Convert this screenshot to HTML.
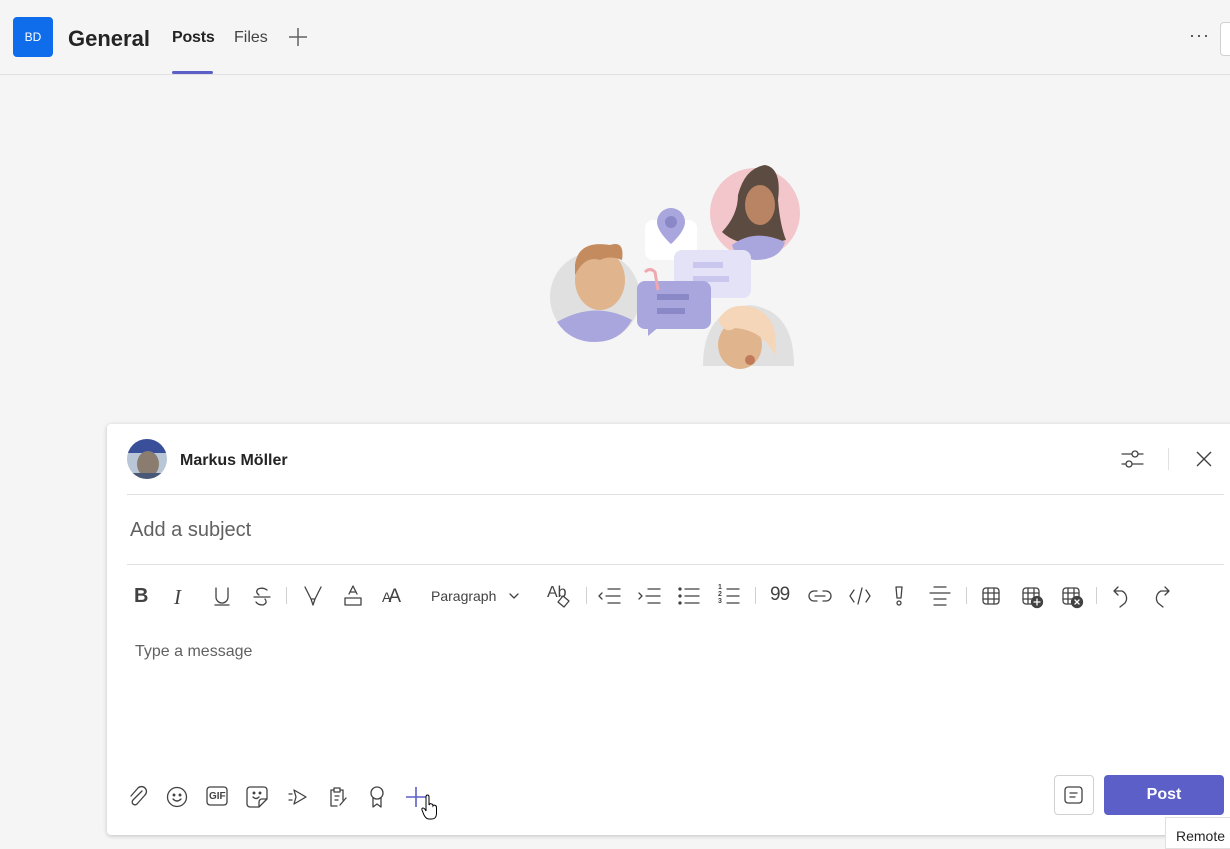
<!DOCTYPE html>
<html><head><meta charset="utf-8"><style>
*{margin:0;padding:0;box-sizing:border-box}
body{width:1230px;height:846px;overflow:hidden;background:#f5f5f5;font-family:"Liberation Sans",sans-serif;position:relative;color:#242424}
.abs{position:absolute}
svg{position:absolute;overflow:visible}
.ic{fill:none;stroke:#424242;stroke-width:1.3;stroke-linecap:round;stroke-linejoin:round}
</style></head><body>
<!-- header -->
<div class="abs" style="left:13px;top:17px;width:40px;height:40px;border-radius:4px;background:#0f6cea;color:#fff;font-size:12px;line-height:40px;text-align:center">BD</div>
<div class="abs" style="left:68px;top:26px;font-size:22px;font-weight:bold;color:#242424">General</div>
<div class="abs" style="left:172px;top:29px;font-size:16px;color:#242424;font-weight:bold;letter-spacing:-0.2px">Posts</div>
<div class="abs" style="left:172px;top:71px;width:41px;height:3px;background:#5b5fc7;border-radius:2px"></div>
<div class="abs" style="left:234px;top:29px;font-size:16px;color:#424242">Files</div>
<svg style="left:288px;top:27px" width="20" height="20"><path d="M10 1V19M1 10H19" stroke="#616161" stroke-width="1.5"/></svg>
<div class="abs" style="left:1189px;top:25px;font-size:18px;color:#424242;letter-spacing:1px">···</div>
<div class="abs" style="left:1220px;top:22px;width:20px;height:34px;border:1px solid #d1d1d1;border-radius:4px;background:#fff"></div>
<div class="abs" style="left:0;top:74px;width:1230px;height:1px;background:#e0e0e0"></div>

<!-- illustration -->
<svg style="left:540px;top:160px" width="270" height="210" viewBox="0 0 270 210">
<circle cx="55" cy="137" r="45" fill="#e0e0e0"/>
<path d="M17 162Q55 140 92 160Q80 182 55 182Q30 182 17 162Z" fill="#a9a6de"/>
<ellipse cx="60" cy="120" rx="25" ry="30" fill="#e0b48c"/>
<path d="M35 105Q38 80 70 85Q85 80 82 100Q70 95 60 100Q45 95 35 115Z" fill="#c48b5e"/>
<circle cx="215" cy="53" r="45" fill="#f3c6cb"/>
<path d="M182 72Q198 55 198 35Q205 8 225 5Q242 8 238 40Q240 65 246 80Q230 84 215 84Q195 84 182 72Z" fill="#5b4b40"/>
<ellipse cx="220" cy="45" rx="15" ry="20" fill="#b88463"/>
<path d="M192 85Q215 68 245 82Q240 100 215 100Q195 98 192 85Z" fill="#a9a6de"/>
<rect x="105" y="60" width="52" height="40" rx="8" fill="#fff"/>
<path d="M131 48a14 14 0 0 1 14 14c0 10-14 22-14 22s-14-12-14-22a14 14 0 0 1 14-14z" fill="#a9a6de"/>
<circle cx="131" cy="62" r="6" fill="#8b88c8"/>
<rect x="134" y="90" width="77" height="48" rx="8" fill="#e3e2f6"/>
<rect x="153" y="102" width="30" height="6" fill="#c9c7ee"/><rect x="153" y="116" width="36" height="6" fill="#c9c7ee"/>
<rect x="97" y="121" width="74" height="48" rx="8" fill="#a9a6de"/>
<path d="M108 165L108 176L120 166Z" fill="#a9a6de"/>
<rect x="117" y="134" width="32" height="6" fill="#8b88c8"/><rect x="117" y="148" width="28" height="6" fill="#8b88c8"/>
<path d="M105 112q5-5 10 0l3 18" stroke="#f0a8b0" stroke-width="3" fill="none"/>
<path d="M163 206Q163 150 210 145Q254 150 254 206Z" fill="#e0e0e0"/>
<ellipse cx="200" cy="185" rx="22" ry="24" fill="#e0b48c"/>
<path d="M178 160Q190 140 215 148Q240 158 235 195Q222 170 195 168Q185 175 178 160Z" fill="#f5d6b8"/>
<circle cx="210" cy="200" r="5" fill="#c07a5a"/>
</svg>

<!-- compose box -->
<div class="abs" style="left:107px;top:424px;width:1130px;height:411px;background:#fff;border-radius:4px;box-shadow:0 1px 4px rgba(0,0,0,.22)"></div>
<div class="abs" style="left:127px;top:439px;width:40px;height:40px;border-radius:50%;overflow:hidden;background:#b8c6d8">
 <div class="abs" style="left:0;top:0;width:40px;height:14px;background:#3a4f9a"></div>
 <div class="abs" style="left:10px;top:12px;width:22px;height:26px;border-radius:50%;background:#8a7d70"></div>
 <div class="abs" style="left:2px;top:34px;width:36px;height:10px;background:#4a5878"></div>
</div>
<div class="abs" style="left:180px;top:452px;font-size:16px;font-weight:bold;color:#242424">Markus Möller</div>
<svg style="left:1121px;top:449px" width="22" height="20" class="ic"><path d="M1 5H22M1 15H22" stroke="#424242" stroke-width="1.2"/><circle cx="14" cy="5" r="3" fill="#fff" stroke="#424242"/><circle cx="8" cy="15" r="3" fill="#fff" stroke="#424242"/></svg>
<div class="abs" style="left:1168px;top:448px;width:1px;height:22px;background:#e0e0e0"></div>
<svg style="left:1196px;top:451px" width="16" height="16"><path d="M1 1L15 15M15 1L1 15" stroke="#424242" stroke-width="1.4"/></svg>
<div class="abs" style="left:127px;top:494px;width:1097px;height:1px;background:#e0e0e0"></div>
<div class="abs" style="left:130px;top:519px;font-size:20px;color:#616161">Add a subject</div>
<div class="abs" style="left:127px;top:564px;width:1097px;height:1px;background:#e0e0e0"></div>

<!-- toolbar -->
<div class="abs" style="left:134px;top:585px;font-size:20px;font-weight:bold;color:#424242">B</div>
<div class="abs" style="left:174px;top:585px;font-size:21px;font-style:italic;font-family:'Liberation Serif',serif;color:#424242">I</div>
<svg style="left:213px;top:587px" width="18" height="20" class="ic"><path d="M3 1V10a6 6 0 0 0 12 0V1M2 18H16"/></svg>
<svg style="left:253px;top:587px" width="18" height="20" class="ic"><path d="M14 3Q10 0 5 2Q2 5 6 8M12 12Q15 16 10 18Q5 18 3 15M1 10H17"/></svg>
<div class="abs" style="left:286px;top:587px;width:1px;height:17px;background:#d1d1d1"></div>
<svg style="left:303px;top:586px" width="20" height="20" class="ic"><path d="M2 1L8 13H12L18 1M8 13L10 19L12 13"/></svg>
<svg style="left:343px;top:585px" width="20" height="22" class="ic"><path d="M6 9L10 1L14 9M7 7H13"/><rect x="2" y="13" width="16" height="7"/></svg>
<div class="abs" style="left:382px;top:586px;font-size:19px;color:#424242;letter-spacing:-3px"><span style="font-size:14px">A</span>A</div>
<div class="abs" style="left:431px;top:588px;font-size:14px;color:#424242">Paragraph</div>
<svg style="left:509px;top:592px" width="10" height="8" class="ic"><path d="M1 2L5 6L9 2"/></svg>
<div class="abs" style="left:547px;top:584px;font-size:16px;color:#424242">Ab</div>
<svg style="left:555px;top:595px" width="16" height="14" class="ic"><path d="M8 1L14 6L9 12L3 7Z"/></svg>
<div class="abs" style="left:586px;top:587px;width:1px;height:17px;background:#d1d1d1"></div>
<svg style="left:598px;top:588px" width="24" height="16" class="ic"><path d="M10 1H22M8 8H22M10 15H22M4 5L1 8L4 11"/></svg>
<svg style="left:638px;top:588px" width="24" height="16" class="ic"><path d="M10 1H22M8 8H22M10 15H22M1 5L4 8L1 11"/></svg>
<svg style="left:678px;top:588px" width="22" height="16" class="ic"><path d="M7 1H21M7 8H21M7 15H21"/><circle cx="2" cy="1" r="1" fill="#424242"/><circle cx="2" cy="8" r="1" fill="#424242"/><circle cx="2" cy="15" r="1" fill="#424242"/></svg>
<div class="abs" style="left:718px;top:584px;font-size:7px;line-height:7px;color:#424242;font-weight:bold">1<br>2<br>3</div>
<svg style="left:725px;top:588px" width="16" height="16" class="ic"><path d="M2 1H14M2 8H14M2 15H14"/></svg>
<div class="abs" style="left:755px;top:587px;width:1px;height:17px;background:#d1d1d1"></div>
<div class="abs" style="left:770px;top:584px;font-size:19px;color:#424242;letter-spacing:-1px">99</div>
<svg style="left:809px;top:589px" width="22" height="14" class="ic"><path d="M8 2H5a5 5 0 0 0 0 10H8M14 2H17a5 5 0 0 1 0 10H14M6 7H16"/></svg>
<svg style="left:849px;top:587px" width="22" height="18" class="ic"><path d="M5 3L1 9L5 15M17 3L21 9L17 15M13 1L9 17"/></svg>
<svg style="left:892px;top:585px" width="14" height="22" class="ic"><path d="M4 2H10L9 13H5Z"/><circle cx="7" cy="18" r="2"/></svg>
<svg style="left:929px;top:586px" width="22" height="20" class="ic"><path d="M5 1H17M1 7H21M5 13H17M5 19H17"/></svg>
<div class="abs" style="left:966px;top:587px;width:1px;height:17px;background:#d1d1d1"></div>
<svg style="left:982px;top:587px" width="18" height="18" class="ic"><rect x="1" y="1" width="16" height="16" rx="3"/><path d="M6 1V17M12 1V17M1 6H17M1 12H17"/></svg>
<svg style="left:1022px;top:587px" width="22" height="22" class="ic"><rect x="1" y="1" width="16" height="16" rx="3"/><path d="M6 1V17M12 1V17M1 6H17M1 12H17"/><circle cx="15" cy="15" r="5.5" fill="#424242"/><path d="M15 12V18M12 15H18" stroke="#fff"/></svg>
<svg style="left:1062px;top:587px" width="22" height="22" class="ic"><rect x="1" y="1" width="16" height="16" rx="3"/><path d="M6 1V17M12 1V17M1 6H17M1 12H17"/><circle cx="15" cy="15" r="5.5" fill="#424242"/><path d="M13 13L17 17M17 13L13 17" stroke="#fff"/></svg>
<div class="abs" style="left:1096px;top:587px;width:1px;height:17px;background:#d1d1d1"></div>
<svg style="left:1113px;top:586px" width="20" height="22" class="ic"><path d="M5 1L1 5L5 9M1 5H9a8 8 0 0 1 3 12L7 21"/></svg>
<svg style="left:1152px;top:586px" width="20" height="22" class="ic"><path d="M13 1L17 5L13 9M17 5H9a8 8 0 0 0-3 12L11 21"/></svg>

<div class="abs" style="left:135px;top:643px;font-size:16px;color:#616161">Type a message</div>

<!-- bottom icons -->
<svg style="left:128px;top:787px" width="20" height="20" class="ic"><path d="M14 4L5 13a2.5 2.5 0 0 0 4 4L17 8a4.5 4.5 0 0 0-7-7L3 9"/></svg>
<svg style="left:166px;top:786px" width="22" height="22" class="ic"><circle cx="11" cy="11" r="9.5"/><path d="M7 13Q11 17 15 13"/><circle cx="8" cy="9" r=".8" fill="#424242"/><circle cx="14" cy="9" r=".8" fill="#424242"/></svg>
<svg style="left:206px;top:786px" width="22" height="20" class="ic"><rect x="1" y="1" width="20" height="18" rx="3"/></svg>
<div class="abs" style="left:209px;top:791px;font-size:10px;font-weight:bold;color:#424242">GIF</div>
<svg style="left:246px;top:786px" width="22" height="22" class="ic"><path d="M4 1H18a3 3 0 0 1 3 3V13L13 21H4a3 3 0 0 1-3-3V4a3 3 0 0 1 3-3zM13 21V16a3 3 0 0 1 3-3H21M7 11Q10 14 13 11"/><circle cx="8" cy="7" r=".8" fill="#424242"/><circle cx="14" cy="7" r=".8" fill="#424242"/></svg>
<svg style="left:288px;top:787px" width="20" height="20" class="ic"><path d="M6 3L18 10L6 17L8 10Z M1 7H4M1 13H4"/></svg>
<svg style="left:328px;top:786px" width="20" height="22" class="ic"><path d="M13 4H15V14M9 20H3V4H5M6 2H12V6H6Z M7 10H11M7 14H10M12 19L18 12"/></svg>
<svg style="left:369px;top:786px" width="16" height="22" class="ic"><circle cx="8" cy="7" r="6"/><path d="M4 12V21L8 18L12 21V12"/></svg>
<svg style="left:405px;top:786px" width="22" height="22"><path d="M11 1V21M1 11H21" stroke="#5b5fc7" stroke-width="1.6"/></svg>
<svg style="left:421px;top:795px" width="18" height="26"><path d="M5 2Q5 0 6.5 0Q8 0 8 2V10Q9 8 10.5 9Q12 9 12 11Q13 9.5 14.5 10.5Q15.5 11 15.5 13V19Q15 24 11 24H8Q5 24 3 20L1 15Q0.5 13 2 13Q3.5 13 5 16Z" fill="#fff" stroke="#000" stroke-width="1"/></svg>

<div class="abs" style="left:1054px;top:775px;width:40px;height:40px;border:1px solid #d1d1d1;border-radius:4px;background:#fff"></div>
<svg style="left:1064px;top:786px" width="20" height="18" class="ic"><rect x="1" y="1" width="17" height="16" rx="3"/><path d="M6 7H13M6 11H11"/></svg>
<div class="abs" style="left:1104px;top:775px;width:120px;height:40px;border-radius:4px;background:#5b5fc7;color:#fff;font-size:16px;font-weight:bold;text-align:center;line-height:40px">Post</div>
<div class="abs" style="left:1165px;top:817px;width:70px;height:32px;border:1px solid #e0e0e0;background:#fff;font-size:14px;color:#242424;padding:10px 0 0 10px">Remote</div>
</body></html>
